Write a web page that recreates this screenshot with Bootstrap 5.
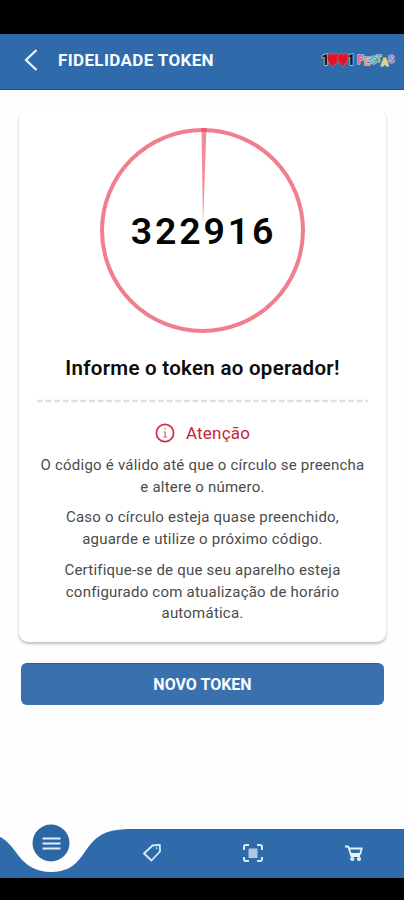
<!DOCTYPE html>
<html lang="pt-BR">
<head>
<meta charset="utf-8">
<meta name="viewport" content="width=device-width, initial-scale=1">
<title>Fidelidade Token</title>
<link href="https://cdn.jsdelivr.net/npm/bootstrap@5.3.0/dist/css/bootstrap.min.css" rel="stylesheet">
<style>
  body { font-family: Roboto, "Liberation Sans", sans-serif; height: 900px; background: #fefefe; color: #0c0c0c; overflow: hidden; }
  svg { display: block; flex: none; }
  .status-strip { height: 34px; background: #000; }
  .app-header { height: 56px; background: #2f6bab; border-bottom: 1px solid #075a9d; padding: 0 9px 3px 24px; }
  .app-title { font-size: 17px; font-weight: 700; line-height: 20px; color: #f4fbff; letter-spacing: .36px; margin-left: 20px; }
  .token-card { margin: 20px 18px 0 19px; height: 532px; border: 0; border-radius: 9px; background: #fff; box-shadow: 0 2px 3px rgba(0,0,0,.25); padding: 17px 18px 0; clip-path: inset(2px -5px -8px -5px); }
  .dial { display: grid; width: 207px; height: 207px; margin-left: 62px; }
  .dial > * { grid-area: 1 / 1; }
  .token-code { font-size: 37.5px; font-weight: 600; line-height: 40px; letter-spacing: 2.8px; color: #050505; padding-left: 2px; }
  .prompt { font-size: 20.5px; font-weight: 600; line-height: 24px; letter-spacing: .28px; margin-top: 22px; }
  .dashes { margin-top: 19px; }
  .warn { color: #c22733; font-size: 17px; line-height: 20px; letter-spacing: .2px; margin-top: 20px; gap: 11px; }
  .notes { font-size: 15px; line-height: 21.7px; letter-spacing: .22px; color: #4b4b4b; margin-top: 12px; }
  .notes p { margin-bottom: 9px; white-space: nowrap; }
  .btn-token { margin: 21px 20px 0 21px; height: 42px; border-radius: 6px; background: #3970ad; border: 0; border-top: 1px solid #1967a5; color: #f7fcff; font-size: 16px; font-weight: 700; padding: 0; }
  .bottom-nav { height: 55px; }
  .bottom-nav > * { grid-area: 1 / 1; }
  .nav-shell { display: grid; }
  .nav-icons { display: grid; grid-template-columns: repeat(4, 101px); justify-items: center; }
  .end-strip { height: 22px; background: #000; }
</style>
</head>
<body class="d-flex flex-column">
<div class="status-strip"></div>
<header class="app-header d-flex align-items-center">
  <svg width="14" height="22" viewBox="0 0 14 22" fill="none" stroke="#e8f7ff" stroke-width="2.200"><path d="M12.500 1 2 11l10.500 10"/></svg>
  <h1 class="app-title mb-0">FIDELIDADE TOKEN</h1>
  <svg class="ms-auto" width="74" height="20" viewBox="0 0 74 20" font-family="Roboto, sans-serif" font-weight="900" stroke-linejoin="round" paint-order="stroke">
    <g stroke="#a9c9df" stroke-width="1.500" fill="#10202a" font-size="15">
      <text x="0" y="15" paint-order="stroke">1</text><text x="25.500" y="15" paint-order="stroke">1</text>
    </g>
    <path d="M12 16.500C8 13 6 10 6.500 7C7.500 2.500 11 3 12 5.500C14 2.500 18 3.500 17.700 8C17.500 11 15 13.500 12 16.500Z" fill="#e31325" stroke="#ef8e9b" stroke-width=".8"/>
    <path d="M22 16.500C18 13 16.500 10 17 7C18 2.500 21 3 22 5.500C24 2.500 27.500 3.500 27 8C26.500 11 24.500 13.500 22 16.500Z" fill="#e31325" stroke="#ef8e9b" stroke-width=".8"/>
    <g stroke="#d2e4e2" stroke-width="1" font-size="10.500">
      <text x="36" y="14" fill="#e4618e" font-size="12">F</text><text x="43" y="15" fill="#e98b8d">E</text><text x="49" y="14" fill="#45b9c2">S</text><text x="55" y="12" fill="#78bd83" font-size="9">T</text><text x="60" y="15.500" fill="#f1cf56">A</text><text x="67" y="12.500" fill="#9c7dba" font-size="10">S</text>
    </g>
  </svg>
</header>
<main class="flex-grow-1 d-flex flex-column">
  <section class="card token-card text-center">
    <div class="dial">
      <svg width="207" height="207" viewBox="0 0 207 207">
        <circle cx="103.500" cy="103.500" r="100.500" fill="none" stroke="#f07f8e" stroke-width="4"/>
        <path d="M102.500 1.500h5L104 97Z" fill="#f38c99"/><path d="M102.500 1h5v4h-5Z" fill="#e9566d"/>
      </svg>
      <div class="token-code align-self-center">322916</div>
    </div>
    <h2 class="prompt mb-0">Informe o token ao operador!</h2>
    <svg class="dashes" width="331" height="4" viewBox="0 0 331 4"><path d="M0 2H331" stroke="#dedede" stroke-width="2.500" stroke-dasharray="6 2.640"/></svg>
    <div class="warn d-flex justify-content-center align-items-center">
      <svg width="20" height="20" viewBox="0 0 20 20" fill="none" stroke="#d12b43"><circle cx="10" cy="10" r="8.600" stroke-width="1.700"/><path d="M8.500 9h1.700v5M8.200 14h3.800M9.200 5.800h1.600" stroke-width="1.200" opacity=".75"/></svg>
      <span>Atenção</span>
    </div>
    <div class="notes">
      <p>O código é válido até que o círculo se preencha<br>e altere o número.</p>
      <p>Caso o círculo esteja quase preenchido,<br>aguarde e utilize o próximo código.</p>
      <p>Certifique-se de que seu aparelho esteja<br>configurado com atualização de horário<br>automática.</p>
    </div>
  </section>
  <button class="btn btn-primary btn-token" type="button">NOVO TOKEN</button>
</main>
<nav class="bottom-nav nav-shell">
  <svg width="404" height="55" viewBox="0 0 404 55"><path d="M0 14C7 17 12 24 18 32C27 44 38 49 51 49C65 49 74 44 82 33C94 16 99 6 133 6H404V55H0Z" fill="#2f6bab"/></svg>
  <div class="nav-icons">
    <svg width="38" height="39" viewBox="0 0 38 39"><circle cx="19" cy="20" r="18.500" fill="#2b66a5"/><path d="M10.500 15.500h18M10.500 20.500h18M10.500 25.500h18" stroke="#e0f1fb" stroke-width="2.200"/></svg>
    <svg class="mt-3" width="20" height="28" viewBox="0 0 20 28" fill="none" stroke="#d7edfa" stroke-width="1.800" stroke-linejoin="round"><path d="M10.500 6.500 17.800 5.800 18 12.500 9.500 21.500 2 14.500Z"/><circle cx="14.500" cy="9.200" r=".6" stroke-width=".8"/></svg>
    <svg class="mt-3" width="20" height="28" viewBox="0 0 20 28" fill="none" stroke="#d7edfa" stroke-width="2"><path d="M1 11V8q0-2 2-2h3M14 6h3q2 0 2 2v3M19 18v2q0 2-2 2h-3M6 22H3q-2 0-2-2v-2"/><path d="M5.500 9.500h9v9.500h-9Z" fill="#adc8de" stroke="none"/></svg>
    <svg class="mt-3" width="20" height="28" viewBox="0 0 20 28" fill="none" stroke="#e4f4fd" stroke-width="1.800" stroke-linejoin="round"><path d="M1 7.500h3.300l3 9.500h8.700M5 9.500h12.800l-1.600 5.500H7"/><circle cx="8.300" cy="20" r="1.200"/><circle cx="15" cy="20" r="1.200"/></svg>
  </div>
</nav>
<div class="end-strip"></div>
<script src="https://cdn.jsdelivr.net/npm/bootstrap@5.3.0/dist/js/bootstrap.bundle.min.js"></script>
</body>
</html>
